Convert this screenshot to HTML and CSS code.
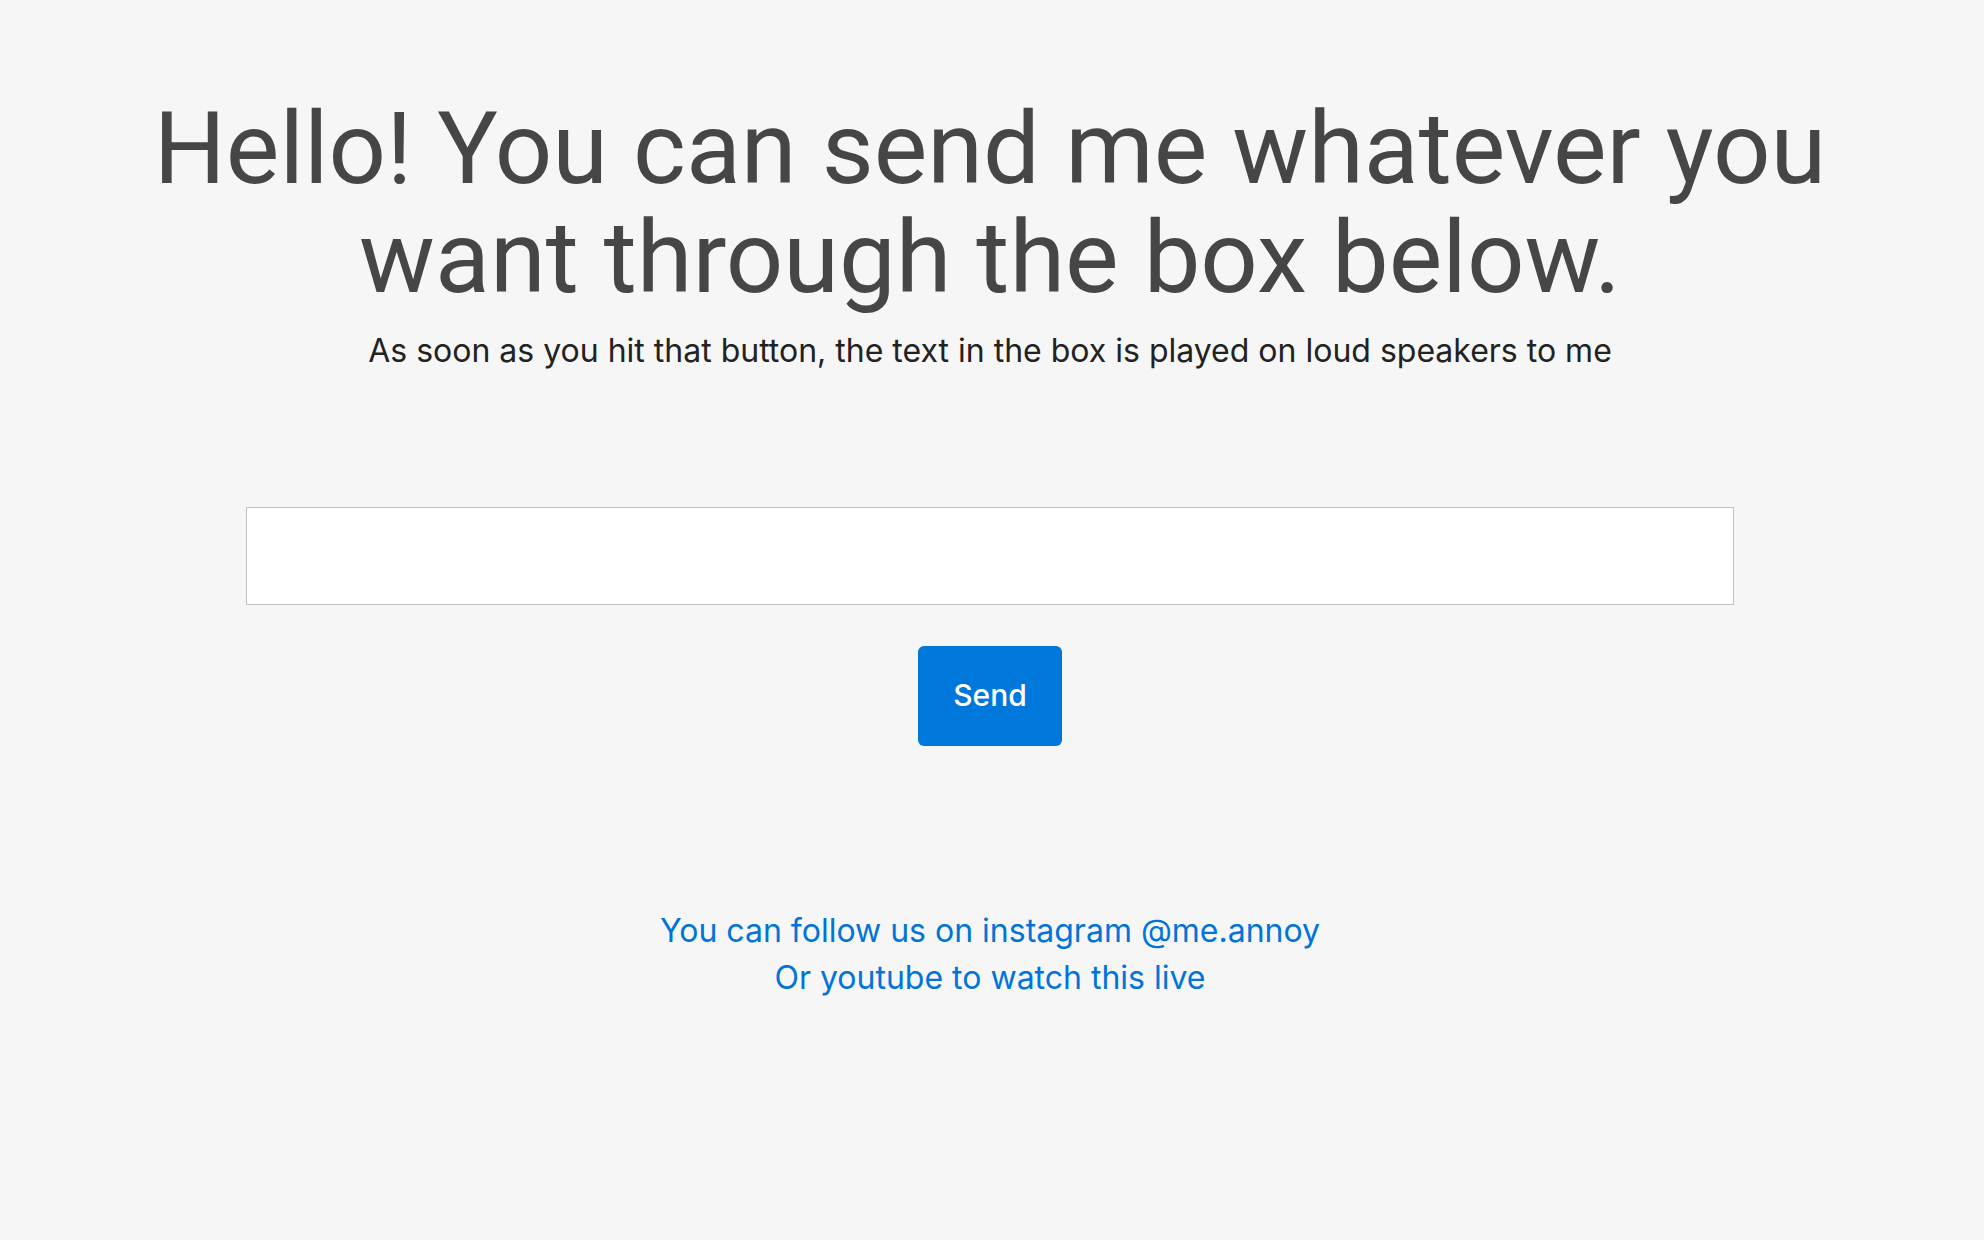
FILE: index.html
```html
<!DOCTYPE html>
<html>
<head>
<meta charset="utf-8">
<title>Annoy me</title>
<link rel="stylesheet" href="styles.css">
</head>
<body>
<main class="page">
  <header class="intro">
    <h1 class="title">Hello! You can send me whatever you<br>want through the box below.</h1>
    <p class="subtitle">As soon as you hit that button, the text in the box is played on loud speakers to me</p>
  </header>
  <form class="send-form" onsubmit="return false;">
    <input class="message" type="text" aria-label="Message">
    <button class="send-btn" type="submit">Send</button>
  </form>
  <footer class="links">
    <a class="link" href="#">You can follow us on instagram @me.annoy</a>
    <a class="link" href="#">Or youtube to watch this live</a>
  </footer>
</main>
</body>
</html>
```
FILE: styles.css
```css
html, body {
  margin: 0;
  padding: 0;
  background: #f6f6f6;
}

.page {
  display: flex;
  flex-direction: column;
  align-items: center;
  padding: 94px 4px 0 0;
}

.intro {
  display: flex;
  flex-direction: column;
  align-items: center;
  text-align: center;
}

.title {
  margin: 0;
  font-family: Roboto, "Liberation Sans", sans-serif;
  font-weight: 400;
  font-size: 101px;
  line-height: 109px;
  letter-spacing: 0;
  color: #464646;
}

.subtitle {
  margin: 19px 0 0;
  font-family: Inter, "Liberation Sans", sans-serif;
  font-size: 32px;
  line-height: 39px;
  color: #222222;
}

.send-form {
  display: flex;
  flex-direction: column;
  align-items: center;
  margin-top: 137px;
}

.message {
  box-sizing: border-box;
  width: 1488px;
  height: 98px;
  margin: 0;
  padding: 0 20px;
  border: 1px solid #c2c2c2;
  border-radius: 0;
  background: #ffffff;
  font-family: Inter, sans-serif;
  font-size: 32px;
  outline: none;
}

.send-btn {
  box-sizing: border-box;
  display: flex;
  align-items: center;
  justify-content: center;
  width: 144px;
  height: 100px;
  margin-top: 41px;
  padding: 0 0 2px;
  border: none;
  border-radius: 6px;
  background: #0077db;
  color: #ffffff;
  font-family: Inter, "Liberation Sans", sans-serif;
  font-weight: 500;
  font-size: 30px;
  cursor: pointer;
}

.links {
  display: flex;
  flex-direction: column;
  align-items: center;
  margin-top: 161px;
}

.link {
  font-family: Inter, "Liberation Sans", sans-serif;
  font-size: 32px;
  line-height: 47px;
  color: #0074d9;
  text-decoration: none;
}
```
